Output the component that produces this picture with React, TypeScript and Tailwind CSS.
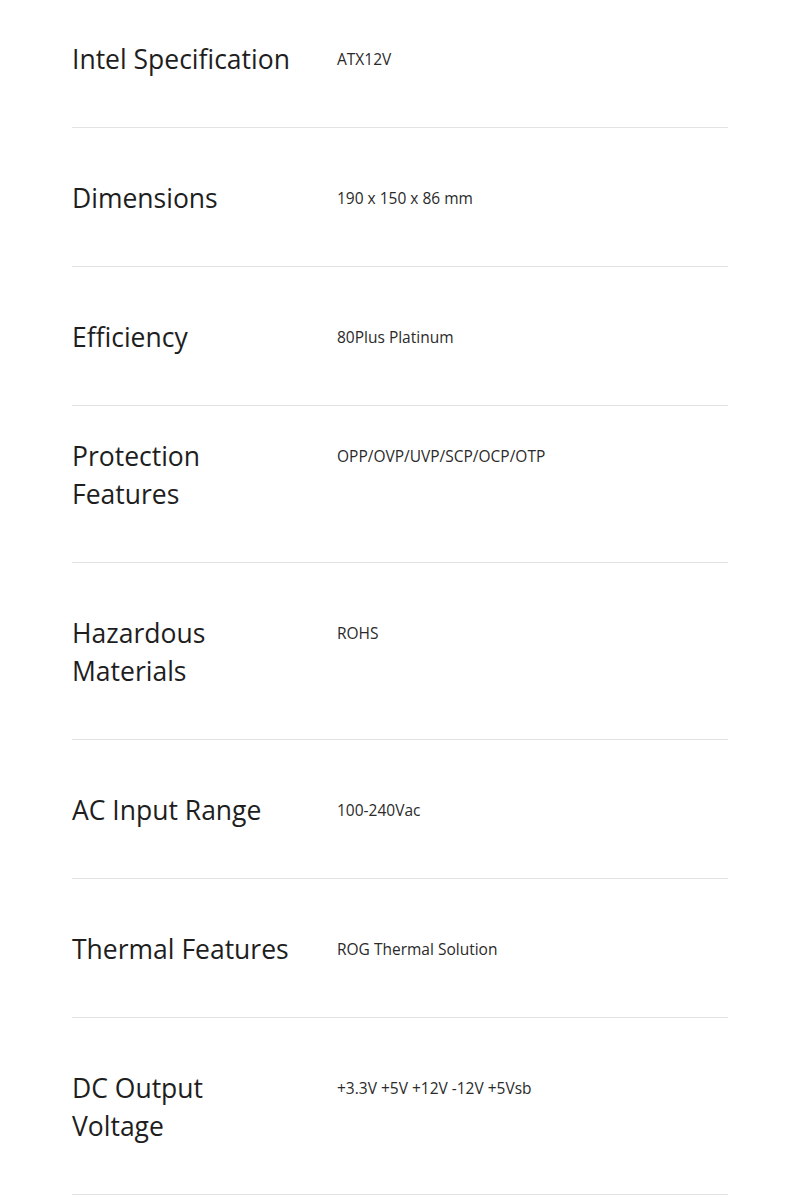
const specs = [
  { label: ["Intel Specification"], value: "ATX12V", pad: "pt-[40px]" },
  { label: ["Dimensions"], value: "190 x 150 x 86 mm", pad: "pt-[51px]" },
  { label: ["Efficiency"], value: "80Plus Platinum", pad: "pt-[51px]" },
  { label: ["Protection", "Features"], value: "OPP/OVP/UVP/SCP/OCP/OTP", pad: "pt-[31px]" },
  { label: ["Hazardous", "Materials"], value: "ROHS", pad: "pt-[51px]" },
  { label: ["AC Input Range"], value: "100-240Vac", pad: "pt-[51px]" },
  { label: ["Thermal Features"], value: "ROG Thermal Solution", pad: "pt-[51px]" },
  { label: ["DC Output", "Voltage"], value: "+3.3V +5V +12V -12V +5Vsb", pad: "pt-[51px]" },
];

export default function App() {
  return (
    <div className="min-h-[1195px] bg-white px-[72px] font-['Open_Sans',sans-serif] text-[#1e1e1e]">
      {specs.map((s) => (
        <div key={s.value} className={`flex border-b border-[#e2e2e2] pb-[49px] ${s.pad}`}>
          <div className="w-[265px] shrink-0 text-[26.5px] leading-[38px]">
            {s.label.map((l) => (
              <div key={l}>{l}</div>
            ))}
          </div>
          <div className="text-[15.5px] leading-[38px] text-[#2a2a2a]">{s.value}</div>
        </div>
      ))}
    </div>
  );
}
